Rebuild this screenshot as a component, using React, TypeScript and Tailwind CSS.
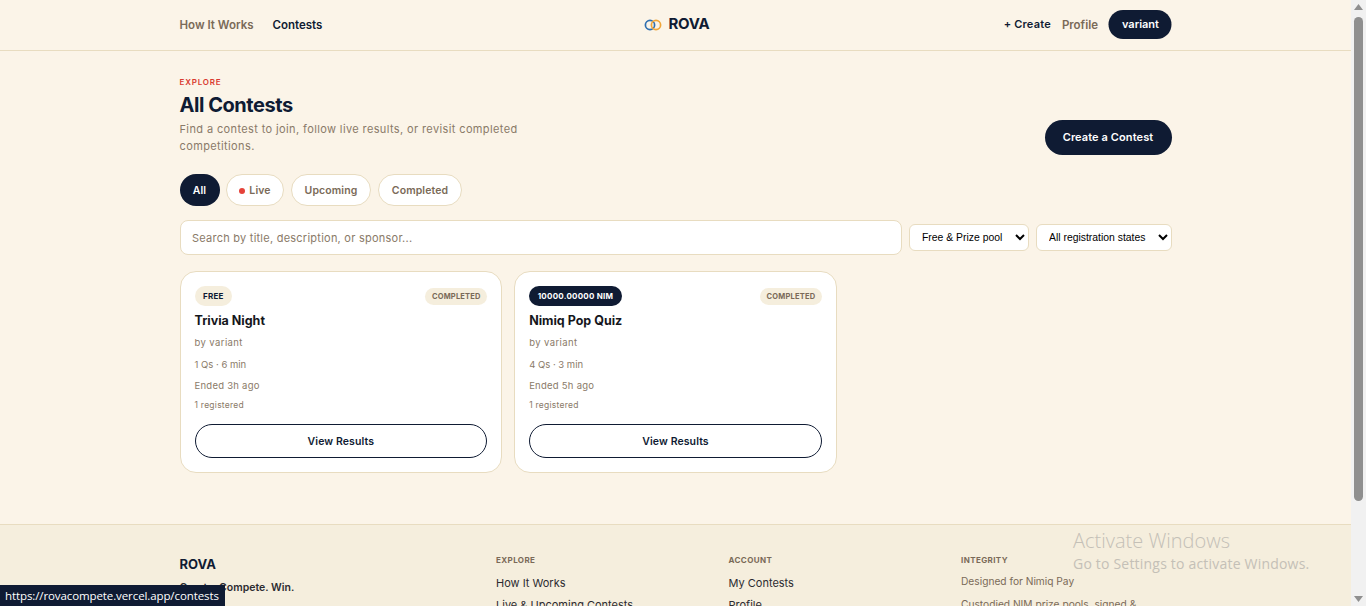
const F = "font-['Inter',sans-serif]";

function Card({ badge, dark, title, qs, ended }: { badge: string; dark?: boolean; title: string; qs: string; ended: string }) {
  return (
    <div className="h-[202px] bg-white border border-[#e8dcc0] rounded-2xl px-[14px] pt-[14px] flex flex-col">
      <div className="flex items-start justify-between h-[20px]">
        <span className={`h-[20px] flex items-center rounded-full px-[8.5px] text-[8px] font-bold tracking-[0.25px] ${dark ? "bg-[#0f1b33] text-white" : "bg-[#f5eedd] text-[#0f1b33]"}`}>{badge}</span>
        <span className="mt-[2px] h-[17px] flex items-center rounded-full px-[6.5px] bg-[#f5eedd] text-[#7a6a58] text-[7.5px] font-bold tracking-[0.2px]">COMPLETED</span>
      </div>
      <div className="mt-[5px] h-[20px] leading-[20px] text-[12.5px] font-bold text-[#15161c]">{title}</div>
      <div className="mt-[4px] h-[16px] leading-[16px] text-[9.5px] tracking-[0.4px] text-[#8a7a68]">by variant</div>
      <div className="mt-[6px] h-[16px] leading-[16px] text-[9.5px] text-[#8a7a68]">{qs}</div>
      <div className="mt-[5px] h-[16px] leading-[16px] text-[9.5px] tracking-[0.25px] text-[#8a7a68]">{ended}</div>
      <div className="mt-[3px] h-[16px] leading-[16px] text-[8.5px] tracking-[0.25px] text-[#8a7a68]">1 registered</div>
      <button className="mt-[11px] h-[34px] pt-[1px] w-full rounded-full border border-[#0f1b33] text-[10.5px] font-semibold tracking-[0.1px] text-[#0f1b33]">View Results</button>
    </div>
  );
}

function FootCol({ title, items, muted }: { title: string; items: string[]; muted?: boolean }) {
  return (
    <div className="-mt-[1px]">
      <div className="h-[12px] leading-[12px] text-[8px] font-bold tracking-[0.4px] text-[#7a6a58]">{title}</div>
      <div className={`flex flex-col ${muted ? "mt-[10px] gap-[12px]" : "mt-[12px] gap-[11px]"}`}>
        {items.map((t) => (
          <div key={t} className={`leading-[11px] whitespace-nowrap ${muted ? "text-[#7a6a58] text-[10.2px]" : "text-[#2c2b30] text-[11px]"}`}>{t}</div>
        ))}
      </div>
    </div>
  );
}

export default function App() {
  return (
    <div className={`relative flex h-[606px] w-[1366px] overflow-hidden bg-[#fbf4e8] ${F}`}>
      <div className="w-[1351px] h-[606px] overflow-hidden">
        <header className="h-[51px] border-b border-[#e8dcc0]">
          <div className="w-[992px] mx-auto h-full pb-[1px] grid grid-cols-3 items-center">
            <nav className="flex items-center gap-[19px] text-[11.5px] font-semibold pt-[3px]">
              <span className="text-[#7a6a58]">How It Works</span>
              <span className="text-[#0f1b33]">Contests</span>
            </nav>
            <div className="flex items-center justify-center gap-[6px] pl-[3px]">
              <svg width="18" height="12" viewBox="0 0 18 12" fill="none">
                <circle cx="6" cy="6" r="4.6" stroke="#2f6fb0" strokeWidth="1.7" />
                <circle cx="12" cy="6" r="4.6" stroke="#f0a63a" strokeWidth="1.7" />
              </svg>
              <span className="text-[15px] font-bold text-[#0f1b33] tracking-[-0.2px]">ROVA</span>
            </div>
            <div className="flex items-center justify-end text-[11px] font-semibold translate-x-[0.5px]">
              <span className="text-[#0f1b33] tracking-[0.2px] mb-[1px]">+ Create</span>
              <span className="ml-[11px] text-[#7a6a58] text-[11.5px] mt-[3px]">Profile</span>
              <span className="ml-[11px] h-[29px] w-[63px] rounded-full bg-[#0f1b33] text-white flex items-center justify-center text-[11px]">variant</span>
            </div>
          </div>
        </header>
        <main className="w-[992px] mx-auto h-[473px]">
          <div className="flex items-end justify-between pt-[25px]">
            <div>
              <div className="h-[12px] leading-[12px] text-[8px] font-semibold tracking-[0.8px] text-[#d93a30]">EXPLORE</div>
              <h1 className="mt-[5px] h-[24px] leading-[24px] text-[20px] font-bold tracking-[-0.45px] text-[#0f1b33]">All Contests</h1>
              <p className="mt-[4px] w-[350px] text-[11px] leading-[17px] text-[#8a7a68] tracking-[0.38px]">Find a contest to join, follow live results, or revisit completed competitions.</p>
            </div>
            <button className="h-[35px] w-[127px] rounded-full bg-[#0f1b33] text-white text-[11px] font-semibold tracking-[0.1px]">Create a Contest</button>
          </div>
          <div className="mt-[19px] flex gap-[7px] text-[10.5px] font-semibold tracking-[0.1px]">
            <span className="h-[32px] w-[40px] -mr-[0.5px] pt-[1px] rounded-full bg-[#0f1b33] text-white flex items-center justify-center">All</span>
            <span className="h-[32px] w-[58px] pt-[1px] rounded-full bg-white border border-[#e8dcc0] text-[#7a6a58] flex items-center justify-center gap-[4px]"><i className="w-[6px] h-[6px] rounded-full bg-[#e5423a]" />Live</span>
            <span className="h-[32px] w-[80px] pt-[1px] rounded-full bg-white border border-[#e8dcc0] text-[#7a6a58] flex items-center justify-center">Upcoming</span>
            <span className="h-[32px] w-[84px] pt-[1px] rounded-full bg-white border border-[#e8dcc0] text-[#7a6a58] flex items-center justify-center">Completed</span>
          </div>
          <div className="mt-[14px] flex items-center gap-[7px]">
            <input readOnly placeholder="Search by title, description, or sponsor..." className="h-[35px] w-[722px] rounded-lg bg-white border border-[#e8dcc0] px-[11.5px] text-[11px] tracking-[0.24px] placeholder:text-[#8a7a68] outline-none" />
            <select className="h-[27px] w-[120px] rounded-md bg-white border border-[#e8dcc0] pl-[8.5px] text-[10.4px] font-['Liberation_Sans',sans-serif] text-black" defaultValue="a"><option value="a">Free &amp; Prize pool</option></select>
            <select className="h-[27px] w-[136px] rounded-md bg-white border border-[#e8dcc0] pl-[8.5px] text-[10.4px] font-['Liberation_Sans',sans-serif] text-black" defaultValue="a"><option value="a">All registration states</option></select>
          </div>
          <div className="mt-[16px] grid grid-cols-3 gap-[12px]">
            <Card badge="FREE" title="Trivia Night" qs="1 Qs · 6 min" ended="Ended 3h ago" />
            <Card badge="10000.00000 NIM" dark title="Nimiq Pop Quiz" qs="4 Qs · 3 min" ended="Ended 5h ago" />
          </div>
        </main>
        <footer className="h-[82px] border-t border-[#e8dcc0] bg-[#f5eedd] overflow-hidden">
          <div className="w-[992px] mx-auto pt-[30px] grid grid-cols-[316.5px_232.5px_232.5px_1fr]">
            <div>
              <div className="mt-[1px] text-[13px] leading-[16px] font-bold text-[#0f1b33]">ROVA</div>
              <div className="mt-[8px] text-[10.5px] font-semibold text-[#2c2b30]">Create. Compete. Win.</div>
            </div>
            <FootCol title="EXPLORE" items={["How It Works", "Live & Upcoming Contests"]} />
            <FootCol title="ACCOUNT" items={["My Contests", "Profile"]} />
            <FootCol title="INTEGRITY" muted items={["Designed for Nimiq Pay", "Custodied NIM prize pools, signed &"]} />
          </div>
        </footer>
      </div>
      <div className="relative w-[15px] h-[606px] bg-[#f1f1f1] flex justify-center">
        <svg className="absolute top-[4px] left-[3px]" width="9" height="6" viewBox="0 0 9 6"><path d="M4.5 0 9 6H0z" fill="#8f8f8f" /></svg>
        <div className="absolute top-[17px] left-[3px] w-[9px] h-[484px] rounded-full bg-[#8f8f8f]" />
        <svg className="absolute bottom-[4px] left-[3px]" width="9" height="6" viewBox="0 0 9 6"><path d="M0 0h9L4.5 6z" fill="#8f8f8f" /></svg>
      </div>
      <div className="absolute left-0 bottom-0 h-[21px] w-[225px] bg-[#0f1b33] text-white text-[11.5px] tracking-[-0.1px] leading-[21px] pl-[5px] whitespace-nowrap font-['Open_Sans',sans-serif]">https://rovacompete.vercel.app/contests</div>
      <div className="absolute left-[1073px] top-[529px] text-[#c4c0b7] font-['Open_Sans',sans-serif]">
        <div className="text-[20px] leading-[24px] font-light">Activate Windows</div>
        <div className="text-[14px] leading-[22px] tracking-[0.2px]">Go to Settings to activate Windows.</div>
      </div>
    </div>
  );
}
